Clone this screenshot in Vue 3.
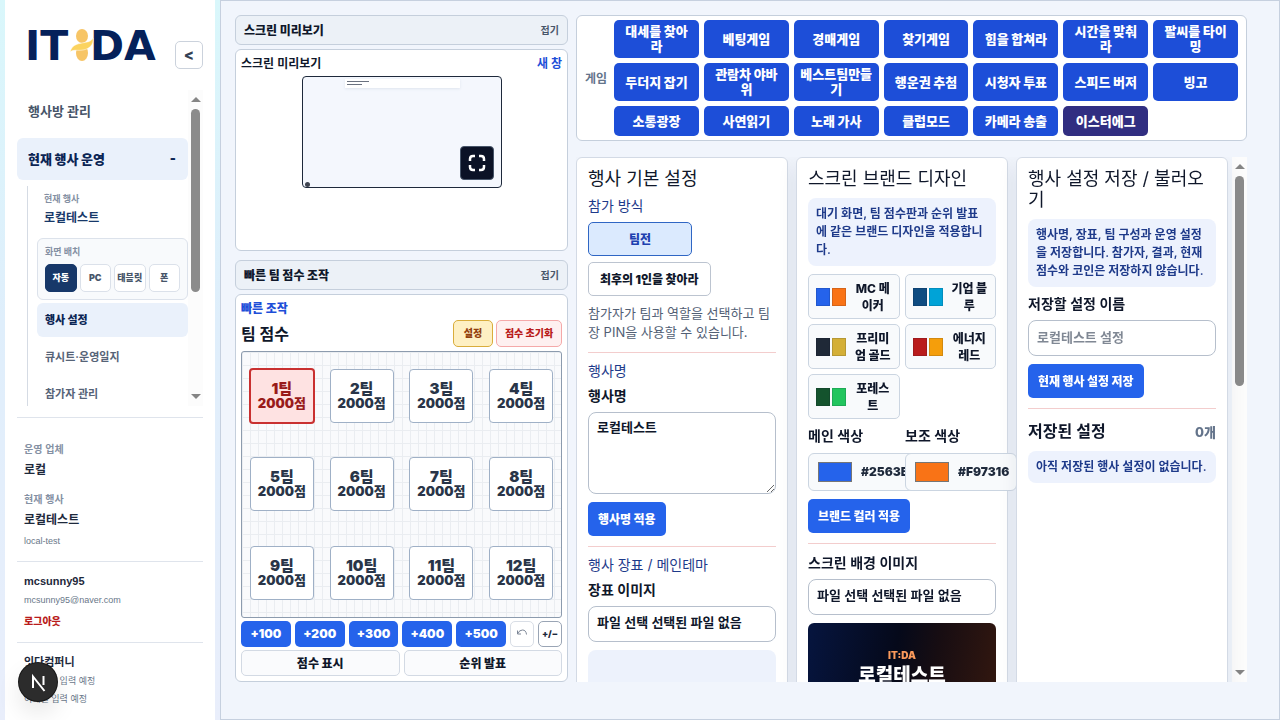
<script setup>
import { ref } from 'vue'

const layouts = ['자동', 'PC', '태블릿', '폰']
const menu = ['행사 설정', '큐시트·운영일지', '참가자 관리']
const games = [
  '대세를 찾아라', '베팅게임', '경매게임', '찾기게임', '힘을 합쳐라', '시간을 맞춰라', '팔씨를 타이밍',
  '두더지 잡기', '관람차 야바위', '베스트팀만들기', '행운권 추첨', '시청자 투표', '스피드 버저', '빙고',
  '소통광장', '사연읽기', '노래 가사', '클럽모드', '카메라 송출', '이스터에그'
]
const teams = Array.from({ length: 12 }, (_, i) => ({ id: i + 1, score: 2000 }))
const steps = [100, 200, 300, 400, 500]
const presets = [
  { name: 'MC 메이커', a: '#2563eb', b: '#f97316' },
  { name: '기업 블루', a: '#0f4c81', b: '#00a3d7' },
  { name: '프리미엄 골드', a: '#1f2937', b: '#d4af37' },
  { name: '에너지 레드', a: '#b91c1c', b: '#f59e0b' },
  { name: '포레스트', a: '#14532d', b: '#22c55e' }
]
const selected = ref(1)
const eventName = ref('로컬테스트')
const saveName = ref('')
const mainColor = ref('#2563eb')
const subColor = ref('#f97316')
</script>

<template>
  <div class="app">
    <aside class="side">
      <header class="brand">
        <svg class="logo" viewBox="0 0 130 36" role="img" aria-label="IT:DA">
          <text x="-3" y="32" class="logo-t">IT</text>
          <text x="62" y="32" class="logo-t">DA</text>
          <ellipse cx="54" cy="8" rx="6" ry="7" fill="#f7c566" />
          <ellipse cx="54" cy="25" rx="6" ry="8" fill="#f7c566" />
          <path d="M42 24c2-7 7-8 12-9s9-1 11-5c1 7-4 11-10 12s-9-1-13 2z" fill="#fbd35f" stroke="#fff" stroke-width=".5" />
        </svg>
        <button class="fold" type="button" aria-label="메뉴 접기">&lt;</button>
      </header>

      <div class="navwrap">
        <nav class="nav">
          <a class="item" href="#">행사방 관리</a>
          <a class="item on" href="#"><span>현재 행사 운영</span><span>-</span></a>
          <div class="sub">
            <div class="cur"><small>현재 행사</small><strong>로컬테스트</strong></div>
            <div class="layout">
              <small>화면 배치</small>
              <div class="layout-row">
                <button v-for="(l, i) in layouts" :key="l" type="button" :class="{ on: i === 0 }">{{ l }}</button>
              </div>
            </div>
            <a v-for="(m, i) in menu" :key="m" href="#" class="subitem" :class="{ on: i === 0 }">{{ m }}</a>
          </div>
        </nav>
        <div class="bar" aria-hidden="true"><i class="up"></i><i class="thumb nav-thumb"></i><i class="down"></i></div>
      </div>

      <footer class="info">
        <section class="s1">
          <small>운영 업체</small><strong>로컬</strong>
          <small class="second">현재 행사</small><strong>로컬테스트</strong>
          <span>local-test</span>
        </section>
        <section class="s2">
          <strong>mcsunny95</strong><span>mcsunny95@naver.com</span>
          <button type="button" class="logout">로그아웃</button>
        </section>
        <section class="s3">
          <strong>잇다컴퍼니</strong><span>전화번호 입력 예정</span><span>이메일 입력 예정</span>
        </section>
      </footer>
      <button class="dev" type="button" aria-label="개발 도구">
        <svg viewBox="0 0 38 38"><path d="M14 25V13.500L25.500 28" fill="none" stroke="#fff" stroke-width="2" /><path d="M24.500 13v9" stroke="#fff" stroke-width="2" /></svg>
      </button>
    </aside>

    <main class="main">
      <div class="left">
        <button class="head" type="button"><strong>스크린 미리보기</strong><span>접기</span></button>
        <section class="card preview">
          <div class="row"><b>스크린 미리보기</b><a href="#">새 창</a></div>
          <div class="screen">
            <div class="mini"><i></i><i></i></div>
            <i class="dot"></i>
            <button type="button" class="full" aria-label="전체 화면">
              <svg viewBox="0 0 18 18" fill="none" stroke="#fff" stroke-width="2.500"><path d="M2 7V5q0-3 3-3h2M11 2h2q3 0 3 3v2M16 11v2q0 3-3 3h-2M7 16H5q-3 0-3-3v-2" /></svg>
            </button>
          </div>
        </section>
        <button class="head second-head" type="button"><strong>빠른 팀 점수 조작</strong><span>접기</span></button>
        <section class="card quick">
          <p class="eyebrow">빠른 조작</p>
          <div class="row score-head">
            <h2>팀 점수</h2>
            <div class="acts"><button type="button" class="set">설정</button><button type="button" class="reset">점수 초기화</button></div>
          </div>
          <div class="board">
            <button v-for="t in teams" :key="t.id" type="button" class="team" :class="{ on: t.id === selected }" @click="selected = t.id">
              <span>{{ t.id }}팀</span><span>{{ t.score }}점</span>
            </button>
          </div>
          <div class="steps">
            <button v-for="s in steps" :key="s" type="button" class="step">+{{ s }}</button>
            <button type="button" class="tool undo" aria-label="되돌리기">
              <svg viewBox="0 0 12 10" fill="none" stroke="#7c8696" stroke-width="1"><path d="M1.500 3.500v3.500h3.500M2 6.500Q3 3 6.500 3T10.500 7.500" /></svg>
            </button>
            <button type="button" class="tool">+/−</button>
          </div>
          <div class="two"><button type="button">점수 표시</button><button type="button">순위 발표</button></div>
        </section>
      </div>

      <div class="right">
        <section class="games">
          <b>게임</b>
          <div class="game-grid">
            <button v-for="g in games" :key="g" type="button" :class="{ egg: g === '이스터에그' }">{{ g }}</button>
          </div>
        </section>

        <div class="scroll">
          <div class="cols">
            <article class="panel">
              <h2>행사 기본 설정</h2>
              <p class="kick">참가 방식</p>
              <div class="modes">
                <button type="button" class="mode on">팀전</button>
                <button type="button" class="mode">최후의 1인을 찾아라</button>
              </div>
              <p class="hint">참가자가 팀과 역할을 선택하고 팀장 PIN을 사용할 수 있습니다.</p>
              <section class="sec">
                <p class="kick">행사명</p>
                <label class="lab" for="ev">행사명</label>
                <textarea id="ev" v-model="eventName"></textarea>
                <button type="button" class="prim">행사명 적용</button>
              </section>
              <section class="sec">
                <p class="kick">행사 장표 / 메인테마</p>
                <label class="lab" for="f1">장표 이미지</label>
                <label class="file">파일 선택 선택된 파일 없음<input id="f1" type="file" /></label>
                <div class="empty"></div>
              </section>
            </article>

            <article class="panel">
              <h2>스크린 브랜드 디자인</h2>
              <p class="note">대기 화면, 팀 점수판과 순위 발표에 같은 브랜드 디자인을 적용합니다.</p>
              <div class="presets">
                <button v-for="p in presets" :key="p.name" type="button">
                  <i :style="{ background: p.a }"></i><i :style="{ background: p.b }"></i><span>{{ p.name }}</span>
                </button>
              </div>
              <div class="colors">
                <label class="lab">메인 색상<span class="pick"><input v-model="mainColor" type="color" /><b>{{ mainColor.toUpperCase() }}</b></span></label>
                <label class="lab">보조 색상<span class="pick"><input v-model="subColor" type="color" /><b>{{ subColor.toUpperCase() }}</b></span></label>
              </div>
              <button type="button" class="prim">브랜드 컬러 적용</button>
              <section class="sec">
                <label class="lab" for="f2">스크린 배경 이미지</label>
                <label class="file">파일 선택 선택된 파일 없음<input id="f2" type="file" /></label>
                <div class="poster"><small>IT:DA</small><strong>로컬테스트</strong></div>
              </section>
            </article>

            <article class="panel">
              <h2>행사 설정 저장 / 불러오기</h2>
              <p class="note">행사명, 장표, 팀 구성과 운영 설정을 저장합니다. 참가자, 결과, 현재 점수와 코인은 저장하지 않습니다.</p>
              <label class="lab" for="sv">저장할 설정 이름</label>
              <input id="sv" v-model="saveName" class="text" type="text" placeholder="로컬테스트 설정" />
              <button type="button" class="prim">현재 행사 설정 저장</button>
              <section class="sec">
                <div class="row saved"><h3>저장된 설정</h3><b>0개</b></div>
                <p class="note">아직 저장된 행사 설정이 없습니다.</p>
              </section>
            </article>
          </div>
          <div class="bar" aria-hidden="true"><i class="up"></i><i class="thumb main-thumb"></i><i class="down"></i></div>
        </div>
      </div>
    </main>
  </div>
</template>

<style>
body {
  margin: 0;
}
</style>

<style scoped>
* {
  box-sizing: border-box;
}
.app {
  height: 100vh;
  min-height: 720px;
  display: flex;
  overflow: hidden;
  padding-left: 5px;
  background: linear-gradient(180deg, #d9f7fb 0%, #dfeefb 45%, #e9eefb 100%);
  color: #0f172a;
  font-family: Inter, "Noto Sans CJK KR", sans-serif;
  font-size: 12px;
}
button, input, textarea {
  font-family: inherit;
  margin: 0;
}
button {
  padding: 0 0 2px;
  border: 0;
}
a {
  text-decoration: none;
}
h2, h3, p {
  margin: 0;
}
.side {
  position: relative;
  width: 210px;
  flex: none;
  background: #fff;
  padding: 0 12px;
  display: flex;
  flex-direction: column;
}
.brand {
  height: 90px;
  flex: none;
  display: flex;
  align-items: flex-start;
  justify-content: space-between;
  padding: 28px 0 0 11px;
}
.logo {
  width: 130px;
  height: 36px;
  overflow: visible;
}
.logo-t {
  font: bold 41px "DejaVu Sans", sans-serif;
  fill: #05215a;
}
.fold {
  width: 28px;
  height: 28px;
  margin-top: 13px;
  border: 1px solid #cbd2dc;
  border-radius: 5px;
  background: #fff;
  color: #334155;
  font-size: 15px;
  font-weight: 800;
}
.navwrap {
  flex: 1 1 0;
  min-height: 0;
  display: flex;
  overflow: hidden;
  margin-bottom: 11px;
}
.nav {
  flex: 1;
  min-width: 0;
  display: flex;
  flex-direction: column;
  gap: 6px;
}
.item {
  flex: none;
  height: 42px;
  padding: 0 12px 2px 11px;
  border-radius: 6px;
  display: flex;
  align-items: center;
  justify-content: space-between;
  color: #475569;
  font-size: 13px;
  font-weight: 700;
}
.item.on {
  background: #eaf1fb;
  color: #0b2554;
  font-weight: 900;
}
.sub {
  flex: none;
  margin-left: 10px;
  padding-left: 9px;
  border-left: 1px solid #d5dbe4;
  display: flex;
  flex-direction: column;
  gap: 3px;
}
.cur {
  padding: 5px 7px 8px;
  display: flex;
  flex-direction: column;
  gap: 2px;
}
.cur small, .layout small {
  font-size: 9px;
  line-height: 16px;
  font-weight: 700;
  color: #8490a3;
}
.cur strong {
  font-size: 12px;
  line-height: 18px;
  font-weight: 700;
  color: #173869;
}
.layout {
  padding: 5px 7px 7px;
  border: 1px solid #dce2eb;
  border-radius: 6px;
  background: #f8fafc;
  display: flex;
  flex-direction: column;
  gap: 4px;
}
.layout-row {
  display: grid;
  grid-template-columns: repeat(4, minmax(0, 1fr));
  gap: 3px;
}
.layout-row button {
  height: 28px;
  border: 1px solid #dbe1ea;
  border-radius: 5px;
  background: #fff;
  color: #475569;
  font-size: 9px;
  font-weight: 900;
  white-space: nowrap;
}
.layout-row .on {
  background: #173869;
  border-color: #173869;
  color: #fff;
}
.subitem {
  height: 34px;
  padding-left: 8px;
  border-radius: 6px;
  line-height: 34px;
  font-size: 11px;
  font-weight: 700;
  color: #566377;
}
.subitem.on {
  background: #eaf1fb;
  color: #0b2554;
  font-weight: 900;
}
.bar {
  width: 15px;
  flex: none;
  display: flex;
  flex-direction: column;
  align-items: center;
  background: #fcfcfc;
}
.up, .down {
  border: 5px solid transparent;
  border-top: 0;
  border-bottom-color: #858585;
}
.up {
  margin: 7px 0 7px;
}
.down {
  margin: auto 0 7px;
  border-top: 5px solid #858585;
  border-bottom: 0;
}
.thumb {
  width: 9px;
  border-radius: 5px;
  background: #8b8b8b;
}
.nav-thumb {
  height: 58%;
}
.main-thumb {
  height: 40%;
}
.info {
  flex: none;
  font-family: "Liberation Sans", "Noto Sans CJK KR", sans-serif;
}
.info section {
  padding: 0 7px;
  border-top: 1px solid #dfe4ec;
  display: flex;
  flex-direction: column;
  align-items: flex-start;
  white-space: nowrap;
}
.info .s1 {
  padding-top: 22px;
  padding-bottom: 11px;
}
.info small {
  font-size: 10px;
  line-height: 19px;
  font-weight: 700;
  color: #8490a3;
}
.info .second {
  margin-top: 8px;
}
.info strong {
  font-size: 12px;
  line-height: 23px;
  font-weight: 700;
  color: #1e293b;
}
.info span {
  font-size: 9px;
  line-height: 18px;
  color: #697789;
}
.info .s2 {
  padding-top: 9px;
  padding-bottom: 10px;
}
.info .s2 strong, .info .s3 strong {
  font-size: 11px;
  line-height: 20px;
}
.logout {
  margin-top: 3px;
  padding: 0;
  background: none;
  color: #b91c1c;
  font-size: 10px;
  line-height: 20px;
  font-weight: 900;
}
.info .s3 {
  padding-top: 9px;
  padding-bottom: 12px;
}
.dev {
  position: absolute;
  left: 14px;
  bottom: 19px;
  width: 38px;
  height: 38px;
  padding: 0;
  border-radius: 50%;
  background: #2c2c2c;
  box-shadow: 0 0 0 1px #171717, 0 12px 24px rgba(0, 0, 0, .1);
}
.dev svg {
  display: block;
}
.main {
  flex: 1;
  min-width: 0;
  margin-left: 5px;
  padding: 14px 32px 37px 14px;
  border: 1px solid #c6d0df;
  background: #f1f5fc;
  display: grid;
  grid-template-columns: 333px minmax(0, 1fr);
  gap: 8px;
}
.left, .right {
  min-width: 0;
  min-height: 0;
  display: flex;
  flex-direction: column;
}
.head {
  flex: none;
  height: 30px;
  padding: 0 8px 2px;
  border: 1px solid #c5cfdc;
  border-radius: 6px;
  background: #ecf1f7;
  display: flex;
  align-items: center;
  justify-content: space-between;
  color: #0f172a;
  font-size: 12px;
}
.head strong {
  font-weight: 800;
}
.head span {
  font-size: 10px;
  font-weight: 700;
  color: #475569;
}
.second-head {
  margin-top: 9px;
}
.card {
  margin-top: 4px;
  border: 1px solid #c5cfdc;
  border-radius: 6px;
  background: #fff;
  padding: 5px;
}
.row {
  display: flex;
  align-items: center;
  justify-content: space-between;
}
.preview {
  flex: 0 0 202px;
}
.preview .row {
  line-height: 17px;
}
.preview b {
  font-weight: 600;
}
.preview a {
  color: #1d4ed8;
  font-weight: 700;
}
.screen {
  position: relative;
  width: 200px;
  height: 112px;
  margin: 4px auto 0;
  border: 1px solid #1e293b;
  border-radius: 4px;
  background: #f4f7fd;
  overflow: hidden;
}
.mini {
  width: 115px;
  height: 9px;
  margin: 2px auto 0 42px;
  padding: 2px;
  background: #fff;
  box-shadow: 0 1px 3px #dfe5ef;
}
.mini i {
  display: block;
  width: 22px;
  height: 1px;
  margin-bottom: 2px;
  background: #6b7280;
}
.mini i + i {
  width: 15px;
}
.dot {
  position: absolute;
  left: 2px;
  bottom: 0;
  width: 5px;
  height: 5px;
  border-radius: 50%;
  background: #3f4450;
}
.full {
  position: absolute;
  right: 7px;
  bottom: 7px;
  width: 34px;
  height: 34px;
  padding: 0;
  border: 1px solid #475569;
  border-radius: 4px;
  background: #0b1226;
  display: grid;
  place-items: center;
}
.full svg {
  width: 18px;
  height: 18px;
}
.quick {
  flex: 1;
  min-height: 0;
  display: flex;
  flex-direction: column;
}
.eyebrow {
  color: #1d4ed8;
  font-weight: 800;
  line-height: 18px;
}
.score-head {
  margin-top: 2px;
}
.score-head h2 {
  font-size: 16px;
  line-height: 26px;
  font-weight: 700;
}
.acts {
  display: flex;
  align-items: center;
  gap: 3px;
}
.acts button {
  height: 27px;
  border: 1px solid #d9ad3c;
  border-radius: 5px;
  background: #fef0c3;
  color: #92400e;
  font-size: 10px;
  font-weight: 800;
}
.acts .set {
  width: 40px;
}
.acts .reset {
  width: 66px;
  border-color: #f5a9a9;
  background: #fef0f0;
  color: #b91c1c;
}
.board {
  flex: 1;
  min-height: 0;
  margin-top: 4px;
  border: 1px solid #8c9bae;
  border-radius: 3px;
  background-color: #f9fafc;
  background-image: linear-gradient(90deg, #eaedf1 1px, transparent 1px), linear-gradient(#eaedf1 1px, transparent 1px);
  background-size: 8px 13px;
  display: grid;
  grid-template: repeat(3, 1fr) / repeat(4, 1fr);
  place-items: center;
}
.team {
  width: 64px;
  height: 54px;
  padding: 0;
  border: 1px solid #9fb0c6;
  border-radius: 4px;
  background: #fff;
  color: #293548;
  display: flex;
  flex-direction: column;
  align-items: center;
  justify-content: center;
  font-size: 15px;
  line-height: 15px;
  font-weight: 900;
  white-space: nowrap;
}
.team span + span {
  font-size: 13px;
}
.team.on {
  width: 66px;
  height: 56px;
  border: 2px solid #c93030;
  background: #fee2e2;
  color: #991b1b;
}
.steps {
  display: grid;
  grid-template-columns: repeat(5, minmax(0, 1fr)) 24px 24px;
  gap: 4px;
  margin-top: 3px;
}
.steps button {
  height: 26px;
  border-radius: 5px;
  min-width: 0;
}
.step {
  background: #2563eb;
  color: #fff;
  font-size: 12px;
  font-weight: 900;
}
.steps .tool {
  border: 1px solid #9aa5b5;
  background: #fff;
  color: #1e293b;
  font-size: 9px;
  font-weight: 900;
}
.steps .undo {
  border-color: #d9dee6;
}
.undo svg {
  width: 12px;
}
.two {
  display: grid;
  grid-template-columns: 1fr 1fr;
  gap: 4px;
  margin-top: 3px;
}
.two button {
  height: 26px;
  border: 1px solid #d3dae4;
  border-radius: 5px;
  background: #fafbfd;
  color: #0f172a;
  font-size: 12px;
  font-weight: 800;
}
.games {
  flex: none;
  padding: 4px 8px;
  border: 1px solid #c5cfdc;
  border-radius: 6px;
  background: #fff;
  display: flex;
  align-items: center;
  gap: 7px;
}
.games b {
  flex: none;
  padding-bottom: 2px;
  color: #64748b;
  font-weight: 700;
}
.game-grid {
  flex: 1;
  display: grid;
  grid-template-columns: repeat(7, minmax(0, 1fr));
  gap: 5px;
}
.game-grid button {
  min-height: 30px;
  padding: 4px 6px;
  border-radius: 5px;
  background: #1d4ed8;
  color: #fff;
  font-size: 13px;
  line-height: 15px;
  font-weight: 900;
}
.game-grid .egg {
  background: #312e81;
}
.scroll {
  flex: 1;
  min-height: 0;
  margin-top: 16px;
  overflow: hidden;
  display: flex;
  gap: 4px;
}
.cols {
  flex: 1;
  min-width: 0;
  display: grid;
  grid-template-columns: repeat(3, minmax(0, 1fr));
  gap: 8px;
}
.panel {
  min-width: 0;
  padding: 10px 11px;
  border: 1px solid #d3dae5;
  border-radius: 6px;
  background: #fff;
  box-shadow: 0 8px 20px rgba(30, 41, 59, .08);
  position: relative;
  display: flex;
  flex-direction: column;
  align-items: stretch;
  gap: 8px;
}
.panel h2 {
  margin-bottom: 1px;
  font-size: 18px;
  line-height: 21px;
  font-weight: 400;
}
.kick {
  color: #1e3a8a;
  font-size: 14px;
  line-height: 16px;
}
.modes {
  display: flex;
  flex-direction: column;
  align-items: flex-start;
  gap: 6px;
}
.mode {
  height: 34px;
  min-width: 104px;
  padding: 0 11px 2px;
  border: 1px solid #bcc4d0;
  border-radius: 5px;
  background: #fff;
  color: #0f172a;
  font-size: 12px;
  font-weight: 900;
}
.mode.on {
  border-color: #2f66c4;
  background: #dbeafe;
  color: #1e40af;
}
.hint {
  color: #526075;
  font-size: 13px;
  line-height: 19px;
}
.sec {
  margin-top: 2px;
  padding-top: 10px;
  border-top: 1px solid #f3cdcd;
  display: flex;
  flex-direction: column;
  gap: 8px;
}
.lab {
  font-size: 14px;
  line-height: 17px;
  font-weight: 600;
}
textarea, .text, .file {
  border: 1px solid #b6bfcc;
  border-radius: 8px;
  background: #fff;
  color: #0f172a;
  font-size: 13px;
  font-weight: 600;
}
textarea {
  display: block;
  width: 100%;
  height: 82px;
  padding: 5px 8px;
  line-height: 18px;
}
.text {
  width: 100%;
  height: 36px;
  padding: 0 8px 2px;
}
.text::placeholder {
  color: #808894;
}
.file {
  height: 36px;
  padding: 0 8px;
  line-height: 30px;
  position: relative;
  overflow: hidden;
}
.file input {
  position: absolute;
  inset: 0;
  opacity: 0;
}
.prim {
  align-self: flex-start;
  height: 34px;
  padding: 0 10px 2px;
  border-radius: 5px;
  background: #2563eb;
  color: #fff;
  font-size: 12px;
  font-weight: 900;
}
.empty {
  height: 100px;
  border-radius: 8px;
  background: #edf2fc;
}
.note {
  padding: 7px 8px;
  border-radius: 8px;
  background: #edf2fd;
  color: #1e3a8a;
  font-size: 12px;
  line-height: 18px;
  font-weight: 600;
}
.presets {
  display: grid;
  grid-template-columns: 1fr 1fr;
  gap: 5px;
}
.presets button {
  height: 45px;
  padding: 0 7px;
  border: 1px solid #cbd5e1;
  border-radius: 5px;
  background: #f8fafc;
  display: flex;
  align-items: center;
  gap: 2px;
  color: #0f172a;
  font-size: 12px;
  line-height: 17px;
  font-weight: 800;
}
.presets i {
  flex: none;
  width: 14px;
  height: 18px;
  border: 1px solid rgba(15, 23, 42, .15);
}
.presets span {
  flex: 1;
  margin-left: 6px;
}
.colors {
  display: grid;
  grid-template-columns: repeat(2, minmax(0, 1fr));
  gap: 6px;
}
.colors .lab {
  line-height: 18px;
}
.pick {
  width: max-content;
  height: 38px;
  margin-top: 8px;
  padding: 0 7px 0 9px;
  border: 1px solid #cbd5e1;
  border-radius: 6px;
  background: #f8fafc;
  display: flex;
  align-items: center;
  gap: 9px;
}
.pick input {
  width: 34px;
  height: 20px;
  padding: 0;
  border: 1px solid #767676;
  background: none;
}
.pick input::-webkit-color-swatch-wrapper {
  padding: 0;
}
.pick input::-webkit-color-swatch {
  border: 0;
}
.pick b {
  font-size: 12px;
  font-weight: 900;
  color: #1e293b;
}
.poster {
  height: 106px;
  padding-top: 25px;
  border-radius: 6px;
  background: linear-gradient(100deg, #06153f 0%, #05091a 45%, #170d12 65%, #35180f 100%);
  color: #fff;
  display: flex;
  flex-direction: column;
  align-items: center;
}
.poster small {
  color: #fb9a5b;
  font-size: 10px;
  line-height: 14px;
  font-weight: 900;
}
.poster strong {
  font-size: 19px;
  line-height: 27px;
  font-weight: 900;
}
.saved h3 {
  font-size: 16px;
  line-height: 24px;
  font-weight: 600;
}
.saved b {
  color: #64748b;
  font-size: 13px;
  font-weight: 800;
}
</style>
